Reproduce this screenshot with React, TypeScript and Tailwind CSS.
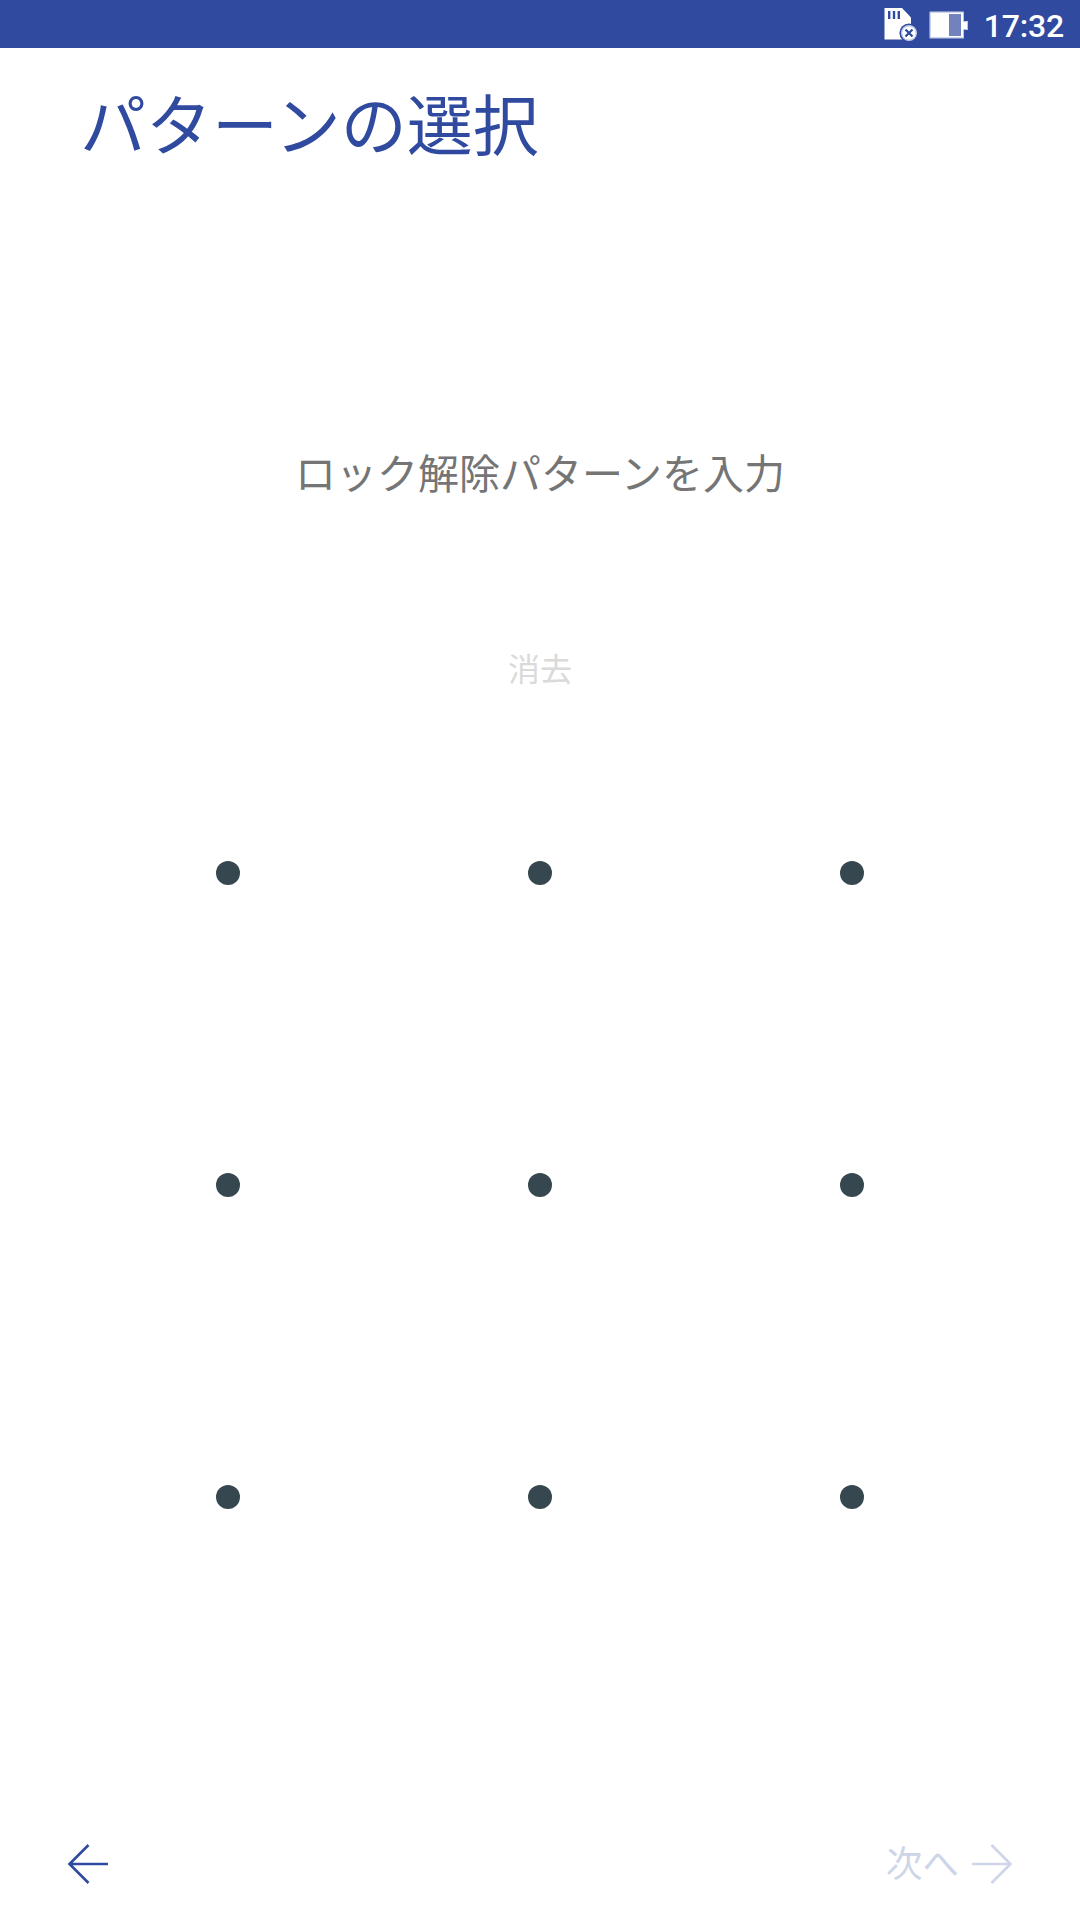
const DOTS = Array.from({ length: 9 }, (_, i) => i);

function StatusIcons() {
    return (
        <svg className="h-12 w-[88px]" viewBox="882 0 88 48">
            {/* SD card */}
            <path d="M884.5 8h17.5l9 9.5v22h-26.5z" fill="#fff" />
            <path d="M889.2 11v8M894 11v8M898.8 11v8" stroke="#304a9f" strokeWidth="2.4" />
            <circle cx="909" cy="33" r="9.6" fill="#304a9f" />
            <circle cx="909" cy="33" r="7.3" fill="#fff" stroke="#c3cbe4" strokeWidth="1.4" />
            <path d="m905.5 29.5 7 7m0-7-7 7" stroke="#304a9f" strokeWidth="2.2" />
            {/* Battery */}
            <path d="M929.7 11.7h34.3v9.3h4v9h-4v8.3h-34.3z" fill="#fff" />
            <path d="M930.2 12.2h33.3v9.3h4v8h-4v8.3h-33.3z" fill="none" stroke="#b9c3e0" />
            <path d="M949 14h12v22h-12z" fill="#7182bc" />
        </svg>
    );
}

function Arrow({ className }: { className?: string }) {
    return (
        <svg className={className} viewBox="0 0 44 44" fill="none" stroke="currentColor" strokeWidth="2.6">
            <path d="M42 22H4M22.5 3 3.5 22l19 19" />
        </svg>
    );
}

export default function App() {
    return (
        <main className="flex h-[1920px] w-[1080px] flex-col bg-white font-['Noto_Sans_CJK_JP',sans-serif]">
            {/* Status bar */}
            <header className="flex h-12 items-center justify-end bg-[#304a9f] pr-4 text-white">
                <StatusIcons />
                <span className="ml-3.5 mt-1 font-[Roboto,sans-serif] text-[32px] leading-10 font-medium tracking-[-0.2px]">17:32</span>
            </header>

            <h1 className="mt-[35px] ml-20 text-[66px] leading-[76px] text-[#304a9f]">パターンの選択</h1>
            <p className="mt-[282px] text-center text-[41px] leading-[60px] text-[#757575]">ロック解除パターンを入力</p>
            <button className="mt-[136px] text-[32px] leading-[60px] text-[#dadada]">消去</button>

            {/* Pattern grid */}
            <div className="mx-auto mt-5 grid h-[936px] w-[936px] grid-cols-3 place-items-center">
                {DOTS.map((dot) => (
                    <span key={dot} className="size-6 rounded-full bg-[#37474f]" />
                ))}
            </div>

            {/* Bottom navigation */}
            <footer className="mt-auto flex h-28 items-center justify-between px-[66px]">
                <button className="text-[#304a9f]">
                    <Arrow className="size-11" />
                </button>
                <button className="flex items-center text-[#ced5e8]">
                    <span className="mr-[11px] mb-1 text-[36.5px] leading-[44px]">次へ</span>
                    <Arrow className="size-11 rotate-180" />
                </button>
            </footer>
        </main>
    );
}
